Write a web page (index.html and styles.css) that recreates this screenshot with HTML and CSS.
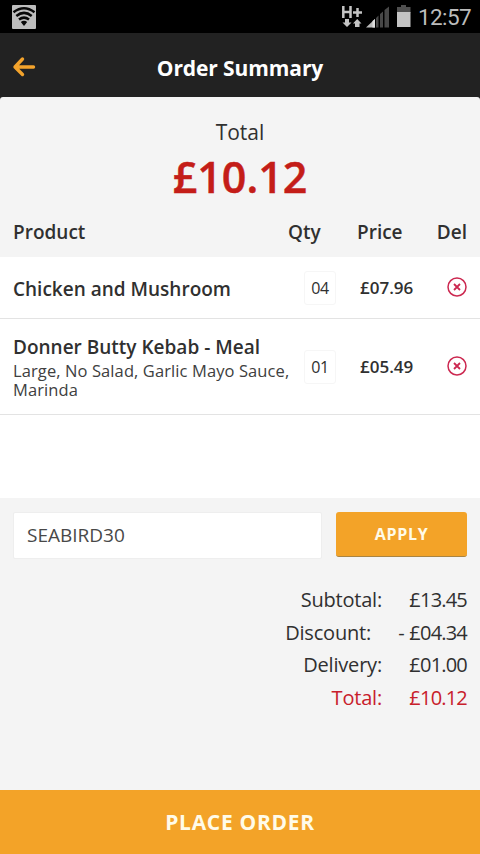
FILE: index.html
```html
<!DOCTYPE html>
<html lang="en">
<head>
<meta charset="utf-8">
<title>Order Summary</title>
<link rel="stylesheet" href="styles.css">
</head>
<body>
<div class="app">
  <div class="status">
    <svg class="wifi" width="24" height="24" viewBox="0 0 24 24"><rect width="24" height="24" rx="1" fill="#bdbdbd"/><g fill="none" stroke="#080808" stroke-width="2.5"><path d="M1.500 7.300Q12-.8 22.500 7.300"/><path d="M4.300 11Q12 4.800 19.700 11"/><path d="M7 14.600Q12 10.600 17 14.600"/></g><path d="M8.800 17Q12 14.500 15.200 17L12 21Z" fill="#080808"/></svg>
    <div class="signals">
      <svg width="72" height="26" viewBox="0 0 72 26"><g fill="none" stroke="#c4c4c4" stroke-width="2.500"><path d="M3.300 1V13M10.500 1V13M3.300 7H10.500M13 7.500H22M17.500 3V12"/></g><path d="M5 14H9V17.500H11.500L7 22L2.500 17.500H5ZM15 22H19.500V18.500H21.500L17.200 14L13 18.500H15Z" fill="#c4c4c4"/><path d="M26 22.500L35 14V22.500Z" fill="#bbb"/><path d="M32.500 16L35 14V22.500H32.500Z" fill="#ddd"/><path d="M36 13L38.500 10.500V22.500H36ZM40 9L43 6.500V22.500H40ZM44.500 5L49 1.500V22.500H44.500Z" fill="#484848"/><path d="M61 0H66V2H70.500V8H57V2H61Z" fill="#505050"/><path d="M57 7H70.500V22H57Z" fill="#c4c4c4"/></svg>
      <span class="clock">12:57</span>
    </div>
  </div>
  <header class="bar">
    <svg class="back" width="24" height="22" viewBox="0 0 24 22"><path d="M10.500 3L3 11L10.500 18.500M3 11H21.500" fill="none" stroke="#f3a32c" stroke-width="3.400" stroke-linecap="round" stroke-linejoin="round"/></svg>
    <h1>Order Summary</h1>
  </header>
  <main class="sheet">
    <section class="hero"><div class="hero-label">Total</div><div class="hero-value">£10.12</div></section>
    <div class="row head"><span>Product</span><span>Qty</span><span>Price</span><span>Del</span></div>
    <section class="items">
      <div class="row item first">
        <div class="name"><b>Chicken and Mushroom</b></div><span class="qty">04</span><span class="price">£07.96</span>
        <svg class="del" width="20" height="20" viewBox="0 0 20 20"><g fill="none" stroke="#cc2850"><circle cx="10" cy="10" r="9" stroke-width="1.500"/><path d="M7 7L13 13M13 7L7 13" stroke-width="1.800"/></g></svg>
      </div>
      <div class="row item second">
        <div class="name"><b>Donner Butty Kebab - Meal</b><p>Large, No Salad, Garlic Mayo Sauce,<br>Marinda</p></div><span class="qty">01</span><span class="price">£05.49</span>
        <svg class="del" width="20" height="20" viewBox="0 0 20 20"><g fill="none" stroke="#cc2850"><circle cx="10" cy="10" r="9" stroke-width="1.500"/><path d="M7 7L13 13M13 7L7 13" stroke-width="1.800"/></g></svg>
      </div>
    </section>
    <div class="coupon"><div class="field">SEABIRD30</div><button class="apply">APPLY</button></div>
    <div class="totals">
      <div><span>Subtotal:</span><span class="amount">£13.45</span></div>
      <div><span>Discount:</span><span class="amount minus">- £04.34</span></div>
      <div><span>Delivery:</span><span class="amount">£01.00</span></div>
      <div class="grand"><span>Total:</span><span class="amount">£10.12</span></div>
    </div>
  </main>
  <button class="place">PLACE ORDER</button>
</div>
</body>
</html>
```
FILE: styles.css
```css
* { box-sizing: border-box; }
body { margin: 0; background: #222; font-family: "Open Sans", "Noto Sans", sans-serif; color: #303030; }
h1, p { margin: 0; }
svg { display: block; flex: none; }
button { border: 0; padding: 0; font-family: inherit; font-weight: 700; color: #fffbe9; background: #f3a328; }
.app { width: 480px; height: 854px; display: flex; flex-direction: column; overflow: hidden; }
.status { height: 33px; flex: none; background: #000; display: flex; justify-content: space-between; padding: 5px 9px 0 12px; }
.signals { display: flex; gap: 6px; }
.clock { font: 22.500px/25px Roboto, sans-serif; color: #bcbcbc; width: 53px; text-align: right; white-space: nowrap; letter-spacing: -.6px; }
.bar { height: 64px; flex: none; display: grid; grid-template-columns: 24px 1fr 24px; align-items: center; padding: 0 12px; background: #222; }
.bar h1 { text-align: center; color: #fff; font-size: 21px; line-height: 28px; font-weight: 700; letter-spacing: -.1px; padding-top: 6px; }
.back { margin-top: 4px; }
.sheet { flex: 1; background: #f4f4f4; border-radius: 3px 3px 0 0; display: flex; flex-direction: column; }
.hero { height: 117px; padding-top: 20px; text-align: center; }
.hero-label { font-size: 21px; line-height: 30px; }
.hero-value { font-size: 43px; line-height: 60px; font-weight: 600; color: #c41d18; -webkit-text-stroke: .5px #c41d18; }
.row { display: grid; grid-template-columns: 291px 32px 1fr 20px; padding: 0 13px; align-items: center; }
.head { height: 43px; font-size: 19px; font-weight: 600; line-height: 26px; padding-bottom: 8px; grid-template-columns: 275px 69px 1fr auto; }
.items { background: #fff; height: 241px; }
.item { border-bottom: 1px solid #e3e3e3; }
.first { height: 62px; }
.first .name { padding-top: 2px; }
.second { height: 96px; }
.name { white-space: nowrap; }
.name b { display: block; font-weight: 600; font-size: 19px; line-height: 26px; }
.second b { line-height: 24px; padding-bottom: 2px; }
.name p { font-size: 16.500px; line-height: 19px; color: #404040; letter-spacing: .1px; }
.qty { height: 34px; border: 1px solid #f6f6f6; border-radius: 3px; font-size: 16px; line-height: 32px; text-align: center; letter-spacing: -.3px; }
.price { font-size: 17px; font-weight: 600; padding-left: 24px; }
.del { margin-top: -2px; }
.coupon { display: flex; gap: 14px; padding: 14px 13px 0; height: 86px; }
.field { width: 309px; height: 47px; background: #fff; border: 1px solid #eee; border-radius: 2px; padding-left: 13px; font-size: 19px; line-height: 44px; color: #484848; }
.apply { width: 131px; height: 45px; border-radius: 3px; border-bottom: 1px solid #a98443; font-size: 16px; letter-spacing: .7px; }
.totals { padding: 0 13px; font-size: 20px; line-height: 32.700px; letter-spacing: -.2px; }
.totals div { display: flex; justify-content: flex-end; white-space: nowrap; }
.amount { width: 85px; text-align: right; letter-spacing: -.8px; }
.minus { width: 96px; word-spacing: 1px; }
.grand { color: #c8202b; }
.place { height: 64px; flex: none; font-size: 21px; letter-spacing: .7px; }
```
